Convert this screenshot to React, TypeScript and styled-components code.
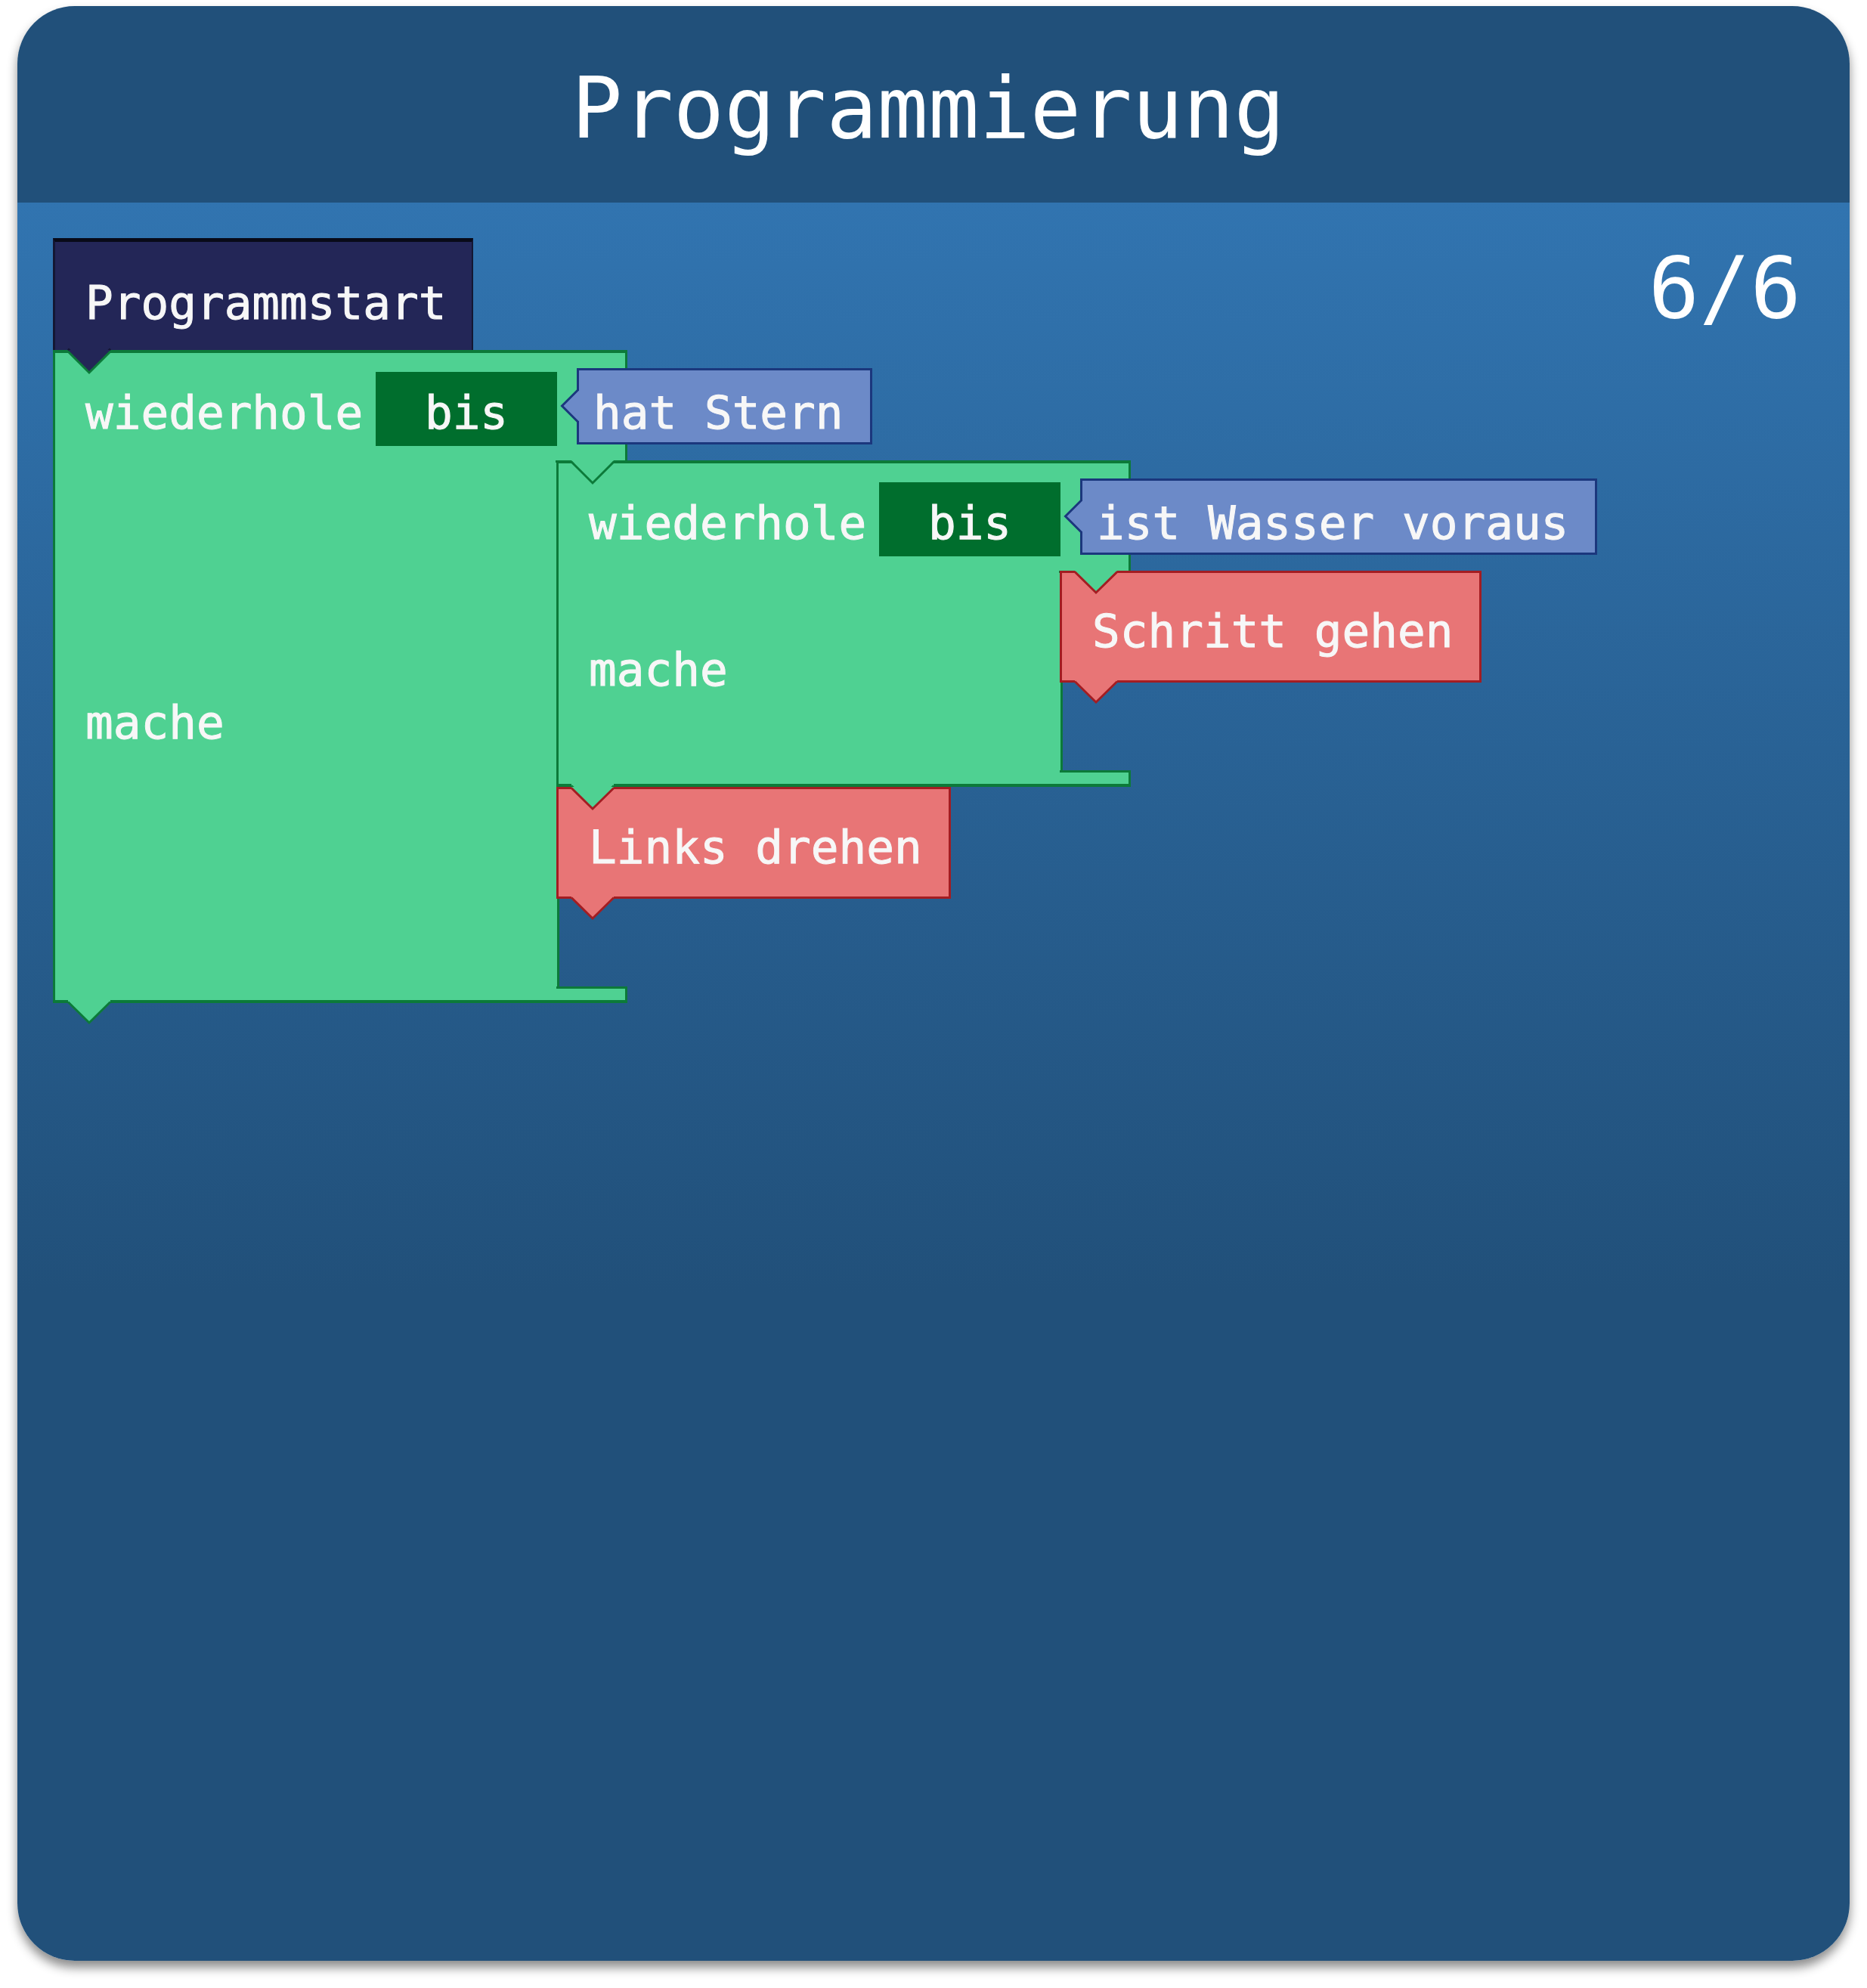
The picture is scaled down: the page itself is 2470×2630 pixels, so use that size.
import React from "react"
import styled, { createGlobalStyle } from "styled-components"

const colors = {
    header: "#21507a",
    start: "#232657",
    startEdge: "#141733",
    loop: "#4fd192",
    loopEdge: "#0c7a39",
    field: "#006e2d",
    sensor: "#6c8ac8",
    sensorEdge: "#1b377d",
    move: "#e87576",
    moveEdge: "#a31d22",
}

const GlobalStyle = createGlobalStyle`
    body {
        margin: 0;
        background: #ffffff;
    }
`

const Page = styled.div`
    padding: 8px 23px 36px;
`

const Card = styled.div`
    width: 2424px;
    height: 2586px;
    border-radius: 76px;
    overflow: hidden;
    display: flex;
    flex-direction: column;
    box-shadow: 0 9px 14px rgba(0, 0, 0, 0.45);
    font-family: "DejaVu Sans Mono", "Liberation Mono", monospace;
    color: #ffffff;
`

const Header = styled.header`
    height: 260px;
    flex-shrink: 0;
    box-sizing: border-box;
    padding: 79px 14px 0 0;
    background: ${colors.header};
    text-align: center;
`

const Title = styled.h1`
    margin: 0;
    font-size: 112px;
    line-height: 112px;
    font-weight: normal;
`

const Workspace = styled.main`
    flex: 1;
    display: flex;
    justify-content: space-between;
    align-items: flex-start;
    padding: 47px 64px 0 47px;
    background: linear-gradient(180deg, #3174b0 0%, #21507a 62%);
`

const Counter = styled.div`
    margin-top: 10px;
    font-size: 112px;
    line-height: 112px;
`

const Program = styled.div`
    display: flex;
    flex-direction: column;
    align-items: flex-start;
`

const Caption = styled.span`
    display: block;
    flex-shrink: 0;
    font-size: 61px;
    line-height: 62px;
    white-space: pre;
    color: #f7f7f7;
    -webkit-text-stroke: 1px #f7f7f7;
`

const WedgeSvg = styled.svg<{ $top: string; $left: number }>`
    position: absolute;
    left: ${p => p.$left}px;
    top: ${p => p.$top};
    z-index: 2;
    overflow: visible;
`

// tab under a block, in its own colour
const Tab = ({ fill, edge, lip, top, left }: { fill: string; edge: string; lip: number; top: string; left: number }) => (
    <WedgeSvg $top={top} $left={left} width={56} height={lip + 30}>
        <polygon points={`0,0 56,0 56,${lip} 28,${lip + 27} 0,${lip}`} fill={fill} />
        <polyline points={`0,${lip - 1.5} 28,${lip + 26} 56,${lip - 1.5}`} fill="none" stroke={edge} strokeWidth={3} />
    </WedgeSvg>
)

// notch on top of a block, showing the colour of what sits above
const Notch = ({ fill, edge, lip, top, left }: { fill: string; edge: string; lip: number; top: string; left: number }) => (
    <WedgeSvg $top={top} $left={left} width={56} height={lip + 30}>
        <polygon points={`0,0 56,0 28,${lip + 27}`} fill={fill} />
        <polyline points={`0,${lip / 2} 28,${lip + 26} 56,${lip / 2}`} fill="none" stroke={edge} strokeWidth={3} />
    </WedgeSvg>
)

const HatBlock = styled.div`
    position: relative;
    box-sizing: border-box;
    width: 556px;
    height: 148px;
    padding: 50px 0 0 40px;
    background: ${colors.start};
    border-top: 5px solid #080a18;
    border-left: 3px solid ${colors.startEdge};
    border-right: 2px solid ${colors.startEdge};
`

const ActionBlock = styled.div`
    position: relative;
    box-sizing: border-box;
    height: 148px;
    padding: 46px 35px 0 40px;
    background: ${colors.move};
    border: 3px solid ${colors.moveEdge};
`

const SensorBlock = styled.div`
    position: relative;
    flex-shrink: 0;
    box-sizing: border-box;
    height: 101px;
    margin: -5px 0 0 26px;
    padding: 25px 35px 0 19px;
    background: ${colors.sensor};
    border: 3px solid ${colors.sensorEdge};
`

const PlugSvg = styled.svg`
    position: absolute;
    left: -24px;
    top: 27px;
    overflow: visible;
`

const LoopShell = styled.div`
    position: relative;
    display: flex;
    flex-direction: column;
    align-items: flex-start;
`

const LoopHead = styled.div`
    position: relative;
    box-sizing: border-box;
    width: 760px;
    height: 149px;
    display: flex;
    align-items: flex-start;
    padding: 25px 0 0 40px;
    background: ${colors.loop};
    border: 3px solid ${colors.loopEdge};
    border-top-width: 4px;
    border-bottom: none;

    > ${Caption} {
        padding-top: 23px;
        width: 374px;
    }

    &::after {
        content: "";
        position: absolute;
        left: 662px;
        right: 0;
        bottom: 0;
        height: 3px;
        background: ${colors.loopEdge};
    }
`

const UntilField = styled.div`
    flex-shrink: 0;
    box-sizing: border-box;
    width: 240px;
    height: 98px;
    margin-left: 10px;
    padding-top: 23px;
    display: flex;
    justify-content: center;
    background: ${colors.field};
`

const LoopMouth = styled.div`
    display: flex;
    align-items: stretch;
`

const LoopSide = styled.div`
    flex-shrink: 0;
    box-sizing: border-box;
    width: 670px;
    display: flex;
    align-items: center;
    padding: 0 0 6px 40px;
    background: ${colors.loop};
    border-left: 3px solid ${colors.loopEdge};
    border-right: 3px solid ${colors.loopEdge};
`

const Slot = styled.div`
    display: flex;
    flex-direction: column;
    align-items: flex-start;
    margin: -3px 0 0 -4px;
    padding-bottom: 116px;
`

const LoopFoot = styled.div`
    position: relative;
    box-sizing: border-box;
    width: 760px;
    height: 22px;
    background: ${colors.loop};
    border: 3px solid ${colors.loopEdge};
    border-top: none;
    border-bottom-width: 4px;

    &::before {
        content: "";
        position: absolute;
        left: 663px;
        right: 0;
        top: 0;
        height: 3px;
        background: ${colors.loopEdge};
    }
`

const Sensor = ({ label }: { label: string }) => (
    <SensorBlock>
        <PlugSvg width={27} height={40}>
            <polygon points="25,0 21,0 0,20 21,40 25,40" fill={colors.sensor} />
            <polyline points="22.5,-1 1.5,20 22.5,41" fill="none" stroke={colors.sensorEdge} strokeWidth={3} />
        </PlugSvg>
        <Caption>{label}</Caption>
    </SensorBlock>
)

const Action = ({ label, above }: { label: string; above: string }) => (
    <ActionBlock>
        <Notch fill={above} edge={colors.moveEdge} lip={3} top="-3px" left={17} />
        <Caption>{label}</Caption>
        <Tab fill={colors.move} edge={colors.moveEdge} lip={3} top="100%" left={17} />
    </ActionBlock>
)

const Loop = ({ condition, above, children }: { condition: string; above: string; children: React.ReactNode }) => (
    <LoopShell>
        <LoopHead>
            <Caption>wiederhole</Caption>
            <UntilField>
                <Caption>bis</Caption>
            </UntilField>
            <Sensor label={condition} />
        </LoopHead>
        <Notch fill={above} edge={colors.loopEdge} lip={4} top="0px" left={20} />
        <LoopMouth>
            <LoopSide>
                <Caption>mache</Caption>
            </LoopSide>
            <Slot>{children}</Slot>
        </LoopMouth>
        <LoopFoot />
        <Tab fill={colors.loop} edge={colors.loopEdge} lip={4} top="calc(100% - 4px)" left={20} />
    </LoopShell>
)

export default function App() {
    return (
        <Page>
            <GlobalStyle />
            <Card>
                <Header>
                    <Title>Programmierung</Title>
                </Header>
                <Workspace>
                    <Program>
                        <HatBlock>
                            <Caption>Programmstart</Caption>
                            <Tab fill={colors.start} edge={colors.startEdge} lip={0} top="100%" left={17} />
                        </HatBlock>
                        <Loop condition="hat Stern" above={colors.start}>
                            <Loop condition="ist Wasser voraus" above={colors.loop}>
                                <Action label="Schritt gehen" above={colors.loop} />
                            </Loop>
                            <Action label="Links drehen" above={colors.loop} />
                        </Loop>
                    </Program>
                    <Counter>6/6</Counter>
                </Workspace>
            </Card>
        </Page>
    )
}
